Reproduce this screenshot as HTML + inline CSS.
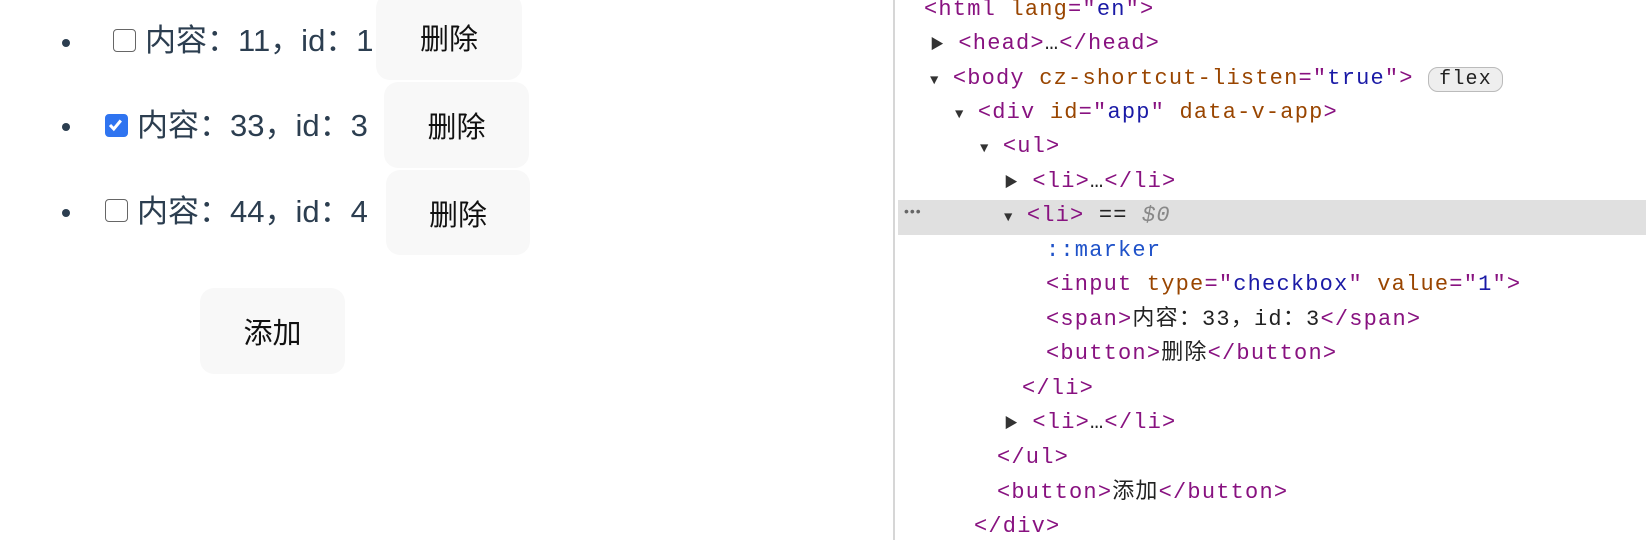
<!DOCTYPE html>
<html><head><meta charset="utf-8"><style>
body{margin:0;width:1646px;height:540px;background:#fff;position:relative;overflow:hidden;font-family:"Liberation Sans","Noto Sans CJK SC",sans-serif}
.a{position:absolute}
.dot{width:8px;height:8px;border-radius:50%;background:#2c3e50}
.cb{width:23px;height:23px;border:1.5px solid #666;border-radius:4px;box-sizing:border-box;background:#fff}
.cb.on{background:#2f74f0;border-color:#2f74f0}
.t{font-size:31px;color:#2c3e50;line-height:32px;white-space:nowrap}
.btn{background:#f8f8f8;border-radius:14px;font-size:29px;color:#111;display:flex;align-items:center;justify-content:center}
.dv{font-family:"Liberation Mono","Noto Sans CJK SC",monospace;font-size:22px;letter-spacing:1.2px;line-height:34px;white-space:nowrap;color:#222}
.g{color:#881280}.n{color:#994500}.v{color:#1a1aa6}
.tri{font-size:14px;color:#333;letter-spacing:0}
</style></head><body>
<div class="a dot" style="left:62px;top:39px"></div>
<div class="a dot" style="left:62px;top:123px"></div>
<div class="a dot" style="left:62px;top:209px"></div>
<div class="a cb" style="left:113px;top:29px"></div>
<div class="a cb on" style="left:105px;top:114px"><svg width="20" height="20" viewBox="0 0 20 20"><path d="M4 10l3.8 4 7-8.5" stroke="#fff" stroke-width="3" fill="none"/></svg></div>
<div class="a cb" style="left:105px;top:199px"></div>
<div class="a t" style="left:145px;top:25px">内容：11，id：1</div>
<div class="a t" style="left:137px;top:110px">内容：33，id：3</div>
<div class="a t" style="left:137px;top:196px">内容：44，id：4</div>
<div class="a btn" style="left:376px;top:-6px;width:146px;height:86px">删除</div>
<div class="a btn" style="left:384px;top:82px;width:145px;height:86px">删除</div>
<div class="a btn" style="left:386px;top:170px;width:144px;height:85px">删除</div>
<div class="a btn" style="left:200px;top:288px;width:145px;height:86px">添加</div>
<div class="a" style="left:893px;top:0;width:2px;height:540px;background:#d6d6d6"></div>
<div class="a" style="left:898px;top:200px;width:748px;height:35px;background:#e0e0e0"></div>
<div class="a" style="left:904px;top:203px;font-size:14px;color:#666;letter-spacing:1px">•••</div>
<div class="a dv" style="left:924px;top:-7px"><span class="g">&lt;html</span> <span class="n">lang</span><span class="g">="</span><span class="v">en</span><span class="g">"&gt;</span></div>
<div class="a dv" style="left:930px;top:27px"><span class="tri">▶</span> <span class="g">&lt;head&gt;</span>…<span class="g">&lt;/head&gt;</span></div>
<div class="a dv" style="left:930px;top:62px"><span class="tri">▼</span> <span class="g">&lt;body</span> <span class="n">cz-shortcut-listen</span><span class="g">="</span><span class="v">true</span><span class="g">"&gt;</span> <span style="border:1px solid #bbb;border-radius:10px;background:#eee;padding:0 10px;font-size:20px">flex</span></div>
<div class="a dv" style="left:955px;top:96px"><span class="tri">▼</span> <span class="g">&lt;div</span> <span class="n">id</span><span class="g">="</span><span class="v">app</span><span class="g">"</span> <span class="n">data-v-app</span><span class="g">&gt;</span></div>
<div class="a dv" style="left:980px;top:130px"><span class="tri">▼</span> <span class="g">&lt;ul&gt;</span></div>
<div class="a dv" style="left:1004px;top:165px"><span class="tri">▶</span> <span class="g">&lt;li&gt;</span>…<span class="g">&lt;/li&gt;</span></div>
<div class="a dv" style="left:1004px;top:199px"><span class="tri">▼</span> <span class="g">&lt;li&gt;</span> == <i style="color:#888">$0</i></div>
<div class="a dv" style="left:1046px;top:234px;color:#1f52c9">::marker</div>
<div class="a dv" style="left:1046px;top:268px"><span class="g">&lt;input</span> <span class="n">type</span><span class="g">="</span><span class="v">checkbox</span><span class="g">"</span> <span class="n">value</span><span class="g">="</span><span class="v">1</span><span class="g">"&gt;</span></div>
<div class="a dv" style="left:1046px;top:303px"><span class="g">&lt;span&gt;</span>内容：33，id：3<span class="g">&lt;/span&gt;</span></div>
<div class="a dv" style="left:1046px;top:337px"><span class="g">&lt;button&gt;</span>删除<span class="g">&lt;/button&gt;</span></div>
<div class="a dv" style="left:1022px;top:372px"><span class="g">&lt;/li&gt;</span></div>
<div class="a dv" style="left:1004px;top:406px"><span class="tri">▶</span> <span class="g">&lt;li&gt;</span>…<span class="g">&lt;/li&gt;</span></div>
<div class="a dv" style="left:997px;top:441px"><span class="g">&lt;/ul&gt;</span></div>
<div class="a dv" style="left:997px;top:476px"><span class="g">&lt;button&gt;</span>添加<span class="g">&lt;/button&gt;</span></div>
<div class="a dv" style="left:974px;top:510px"><span class="g">&lt;/div&gt;</span></div>
</body></html>
